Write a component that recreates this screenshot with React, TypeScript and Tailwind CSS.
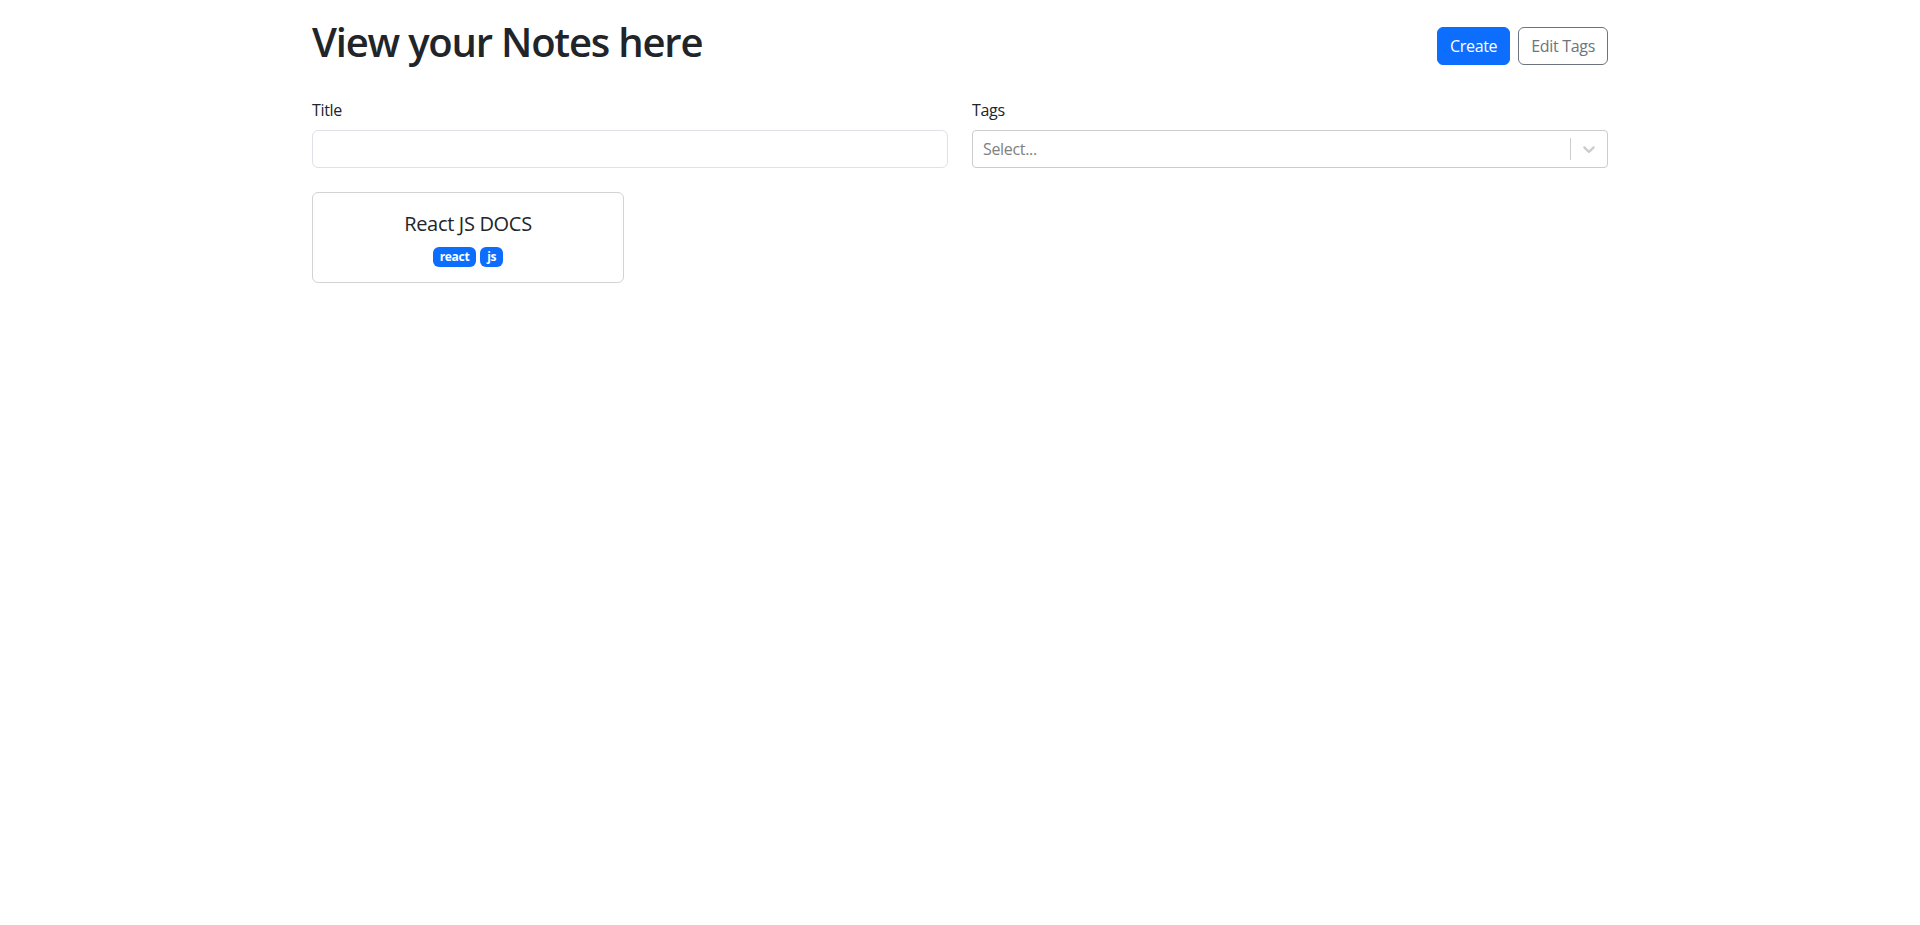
import React from "react";

export default function App() {
  return (
    <div
      className="min-h-[925px] bg-white text-[#212529] tracking-[-0.02em]"
      style={{ fontFamily: '"Open Sans", "Noto Sans", sans-serif' }}
    >
      <div className="mx-auto w-[1320px] px-3 pt-[18px]">
        <div className="mb-6 flex items-center justify-between">
          <h1 className="mb-2 text-[40px] font-semibold leading-[1.2] tracking-[-0.03em]">View your Notes here</h1>
          <div className="flex gap-2">
            <button className="h-[38px] rounded-[6px] border border-[#0d6efd] bg-[#0d6efd] px-3 text-base leading-6 text-white">
              Create
            </button>
            <button className="h-[38px] rounded-[6px] border border-[#6c757d] bg-white px-3 text-base leading-6 text-[#6c757d]">
              Edit Tags
            </button>
          </div>
        </div>

        <div className="mb-6 grid grid-cols-2 gap-6">
          <div>
            <label className="mb-2 block text-base leading-6">Title</label>
            <input
              type="text"
              className="block h-[38px] w-full rounded-[6px] border border-[#dee2e6] px-3 text-base outline-none"
            />
          </div>
          <div>
            <label className="mb-2 block text-base leading-6">Tags</label>
            <div className="flex h-[38px] w-full items-center rounded-[4px] border border-[#cccccc] bg-white">
              <div className="flex-1 px-2">
                <span className="ml-[2px] text-base text-[#808080]">Select...</span>
              </div>
              <span className="my-2 h-[22px] w-px self-center bg-[#cccccc]" />
              <div className="p-2 text-[#cccccc]">
                <svg width="20" height="20" viewBox="0 0 20 20" fill="currentColor">
                  <path d="M4.516 7.548c0.436-0.446 1.043-0.481 1.576 0l3.908 3.747 3.908-3.747c0.533-0.481 1.141-0.446 1.574 0 0.436 0.445 0.408 1.197 0 1.615-0.406 0.418-4.695 4.502-4.695 4.502-0.217 0.223-0.502 0.335-0.787 0.335s-0.57-0.112-0.789-0.335c0 0-4.287-4.084-4.695-4.502s-0.436-1.17 0-1.615z" />
                </svg>
              </div>
            </div>
          </div>
        </div>

        <div className="grid grid-cols-4 gap-4">
          <div className="flex h-[91px] flex-col items-center justify-center gap-2 rounded-[6px] border border-[#d3d3d3] px-4">
            <span className="text-[20px] leading-[30px]">React JS DOCS</span>
            <div className="flex gap-1">
              <span className="rounded-[6px] bg-[#0d6efd] px-[7px] py-[4px] text-[12px] font-bold leading-3 text-white">
                react
              </span>
              <span className="rounded-[6px] bg-[#0d6efd] px-[7px] py-[4px] text-[12px] font-bold leading-3 text-white">
                js
              </span>
            </div>
          </div>
        </div>
      </div>
    </div>
  );
}
